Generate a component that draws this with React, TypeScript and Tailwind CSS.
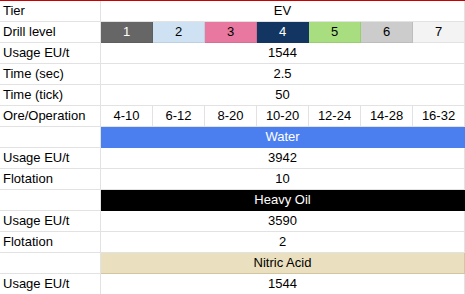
import React from "react";

type Cell = { text: string; bg?: string; fg?: string; span?: boolean };

const levels: Cell[] = [
  { text: "1", bg: "bg-[#666666] border-[#5e5e5e]", fg: "text-white" },
  { text: "2", bg: "bg-[#cfe2f3] border-[#bdd0e2]" },
  { text: "3", bg: "bg-[#e8789f] border-[#d86d92]" },
  { text: "4", bg: "bg-[#123561] border-[#123561]", fg: "text-white" },
  { text: "5", bg: "bg-[#a8de7f] border-[#98cd70]" },
  { text: "6", bg: "bg-[#cccccc] border-[#bdbdbd]" },
  { text: "7", bg: "bg-[#f3f3f3] border-[#e2e2e2]" },
];

const ores = ["4-10", "6-12", "8-20", "10-20", "12-24", "14-28", "16-32"];

const rows: { label: string; cells: Cell[] }[] = [
  { label: "Tier", cells: [{ text: "EV", span: true }] },
  { label: "Drill level", cells: levels },
  { label: "Usage EU/t", cells: [{ text: "1544", span: true }] },
  { label: "Time (sec)", cells: [{ text: "2.5", span: true }] },
  { label: "Time (tick)", cells: [{ text: "50", span: true }] },
  { label: "Ore/Operation", cells: ores.map((o) => ({ text: o })) },
  { label: "", cells: [{ text: "Water", span: true, bg: "bg-[#4b7ff0] border-[#4b7ff0]", fg: "text-white" }] },
  { label: "Usage EU/t", cells: [{ text: "3942", span: true }] },
  { label: "Flotation", cells: [{ text: "10", span: true }] },
  { label: "", cells: [{ text: "Heavy Oil", span: true, bg: "bg-black border-black", fg: "text-white" }] },
  { label: "Usage EU/t", cells: [{ text: "3590", span: true }] },
  { label: "Flotation", cells: [{ text: "2", span: true }] },
  { label: "", cells: [{ text: "Nitric Acid", span: true, bg: "bg-[#eadfbf] border-[#d2c6a2]" }] },
  { label: "Usage EU/t", cells: [{ text: "1544", span: true }] },
];

export default function App() {
  return (
    <div className="w-[465px] h-[294px] overflow-hidden bg-white border-t border-[#cc0000] font-['Liberation_Sans',Arial,sans-serif] text-[13px] leading-[20px] text-black">
      <div className="grid grid-cols-[101px_repeat(7,52px)]">
        {rows.map((row, i) => (
          <React.Fragment key={i}>
            <div className="h-[21px] pl-[3px] border-r border-b border-[#e2e2e2] whitespace-nowrap">
              {row.label}
            </div>
            {row.cells.map((c, j) => (
              <div
                key={j}
                className={`h-[21px] text-center whitespace-nowrap border-r border-b ${
                  c.span ? "col-span-7" : ""
                } ${c.bg ?? "border-[#e2e2e2]"} ${c.fg ?? ""}`}
              >
                {c.text}
              </div>
            ))}
          </React.Fragment>
        ))}
      </div>
    </div>
  );
}
